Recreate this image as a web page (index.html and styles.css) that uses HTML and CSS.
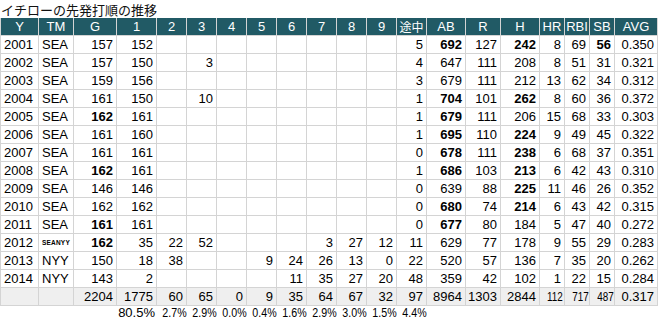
FILE: index.html
```html
<!DOCTYPE html>
<html lang="ja">
<head>
<meta charset="utf-8">
<title>イチローの先発打順の推移</title>
<link rel="stylesheet" href="styles.css">
</head>
<body>
<h1 class="title">イチローの先発打順の推移</h1>
<div class="sheet">
  <div class="row head">
    <div class="c">Y</div><div class="c">TM</div><div class="c">G</div><div class="c">1</div><div class="c">2</div><div class="c">3</div><div class="c">4</div><div class="c">5</div><div class="c">6</div><div class="c">7</div><div class="c">8</div><div class="c">9</div><div class="c jp">途中</div><div class="c">AB</div><div class="c">R</div><div class="c">H</div><div class="c">HR</div><div class="c">RBI</div><div class="c">SB</div><div class="c">AVG</div>
  </div>
  <div class="row">
    <div class="c l">2001</div><div class="c l">SEA</div><div class="c">157</div><div class="c">152</div><div class="c"></div><div class="c"></div><div class="c"></div><div class="c"></div><div class="c"></div><div class="c"></div><div class="c"></div><div class="c"></div><div class="c">5</div><div class="c b">692</div><div class="c">127</div><div class="c b">242</div><div class="c">8</div><div class="c">69</div><div class="c b">56</div><div class="c">0.350</div>
  </div>
  <div class="row">
    <div class="c l">2002</div><div class="c l">SEA</div><div class="c">157</div><div class="c">150</div><div class="c"></div><div class="c">3</div><div class="c"></div><div class="c"></div><div class="c"></div><div class="c"></div><div class="c"></div><div class="c"></div><div class="c">4</div><div class="c">647</div><div class="c">111</div><div class="c">208</div><div class="c">8</div><div class="c">51</div><div class="c">31</div><div class="c">0.321</div>
  </div>
  <div class="row">
    <div class="c l">2003</div><div class="c l">SEA</div><div class="c">159</div><div class="c">156</div><div class="c"></div><div class="c"></div><div class="c"></div><div class="c"></div><div class="c"></div><div class="c"></div><div class="c"></div><div class="c"></div><div class="c">3</div><div class="c">679</div><div class="c">111</div><div class="c">212</div><div class="c">13</div><div class="c">62</div><div class="c">34</div><div class="c">0.312</div>
  </div>
  <div class="row">
    <div class="c l">2004</div><div class="c l">SEA</div><div class="c">161</div><div class="c">150</div><div class="c"></div><div class="c">10</div><div class="c"></div><div class="c"></div><div class="c"></div><div class="c"></div><div class="c"></div><div class="c"></div><div class="c">1</div><div class="c b">704</div><div class="c">101</div><div class="c b">262</div><div class="c">8</div><div class="c">60</div><div class="c">36</div><div class="c">0.372</div>
  </div>
  <div class="row">
    <div class="c l">2005</div><div class="c l">SEA</div><div class="c b">162</div><div class="c">161</div><div class="c"></div><div class="c"></div><div class="c"></div><div class="c"></div><div class="c"></div><div class="c"></div><div class="c"></div><div class="c"></div><div class="c">1</div><div class="c b">679</div><div class="c">111</div><div class="c">206</div><div class="c">15</div><div class="c">68</div><div class="c">33</div><div class="c">0.303</div>
  </div>
  <div class="row">
    <div class="c l">2006</div><div class="c l">SEA</div><div class="c">161</div><div class="c">160</div><div class="c"></div><div class="c"></div><div class="c"></div><div class="c"></div><div class="c"></div><div class="c"></div><div class="c"></div><div class="c"></div><div class="c">1</div><div class="c b">695</div><div class="c">110</div><div class="c b">224</div><div class="c">9</div><div class="c">49</div><div class="c">45</div><div class="c">0.322</div>
  </div>
  <div class="row">
    <div class="c l">2007</div><div class="c l">SEA</div><div class="c">161</div><div class="c">161</div><div class="c"></div><div class="c"></div><div class="c"></div><div class="c"></div><div class="c"></div><div class="c"></div><div class="c"></div><div class="c"></div><div class="c">0</div><div class="c b">678</div><div class="c">111</div><div class="c b">238</div><div class="c">6</div><div class="c">68</div><div class="c">37</div><div class="c">0.351</div>
  </div>
  <div class="row">
    <div class="c l">2008</div><div class="c l">SEA</div><div class="c b">162</div><div class="c">161</div><div class="c"></div><div class="c"></div><div class="c"></div><div class="c"></div><div class="c"></div><div class="c"></div><div class="c"></div><div class="c"></div><div class="c">1</div><div class="c b">686</div><div class="c">103</div><div class="c b">213</div><div class="c">6</div><div class="c">42</div><div class="c">43</div><div class="c">0.310</div>
  </div>
  <div class="row">
    <div class="c l">2009</div><div class="c l">SEA</div><div class="c">146</div><div class="c">146</div><div class="c"></div><div class="c"></div><div class="c"></div><div class="c"></div><div class="c"></div><div class="c"></div><div class="c"></div><div class="c"></div><div class="c">0</div><div class="c">639</div><div class="c">88</div><div class="c b">225</div><div class="c">11</div><div class="c">46</div><div class="c">26</div><div class="c">0.352</div>
  </div>
  <div class="row">
    <div class="c l">2010</div><div class="c l">SEA</div><div class="c">162</div><div class="c">162</div><div class="c"></div><div class="c"></div><div class="c"></div><div class="c"></div><div class="c"></div><div class="c"></div><div class="c"></div><div class="c"></div><div class="c">0</div><div class="c b">680</div><div class="c">74</div><div class="c b">214</div><div class="c">6</div><div class="c">43</div><div class="c">42</div><div class="c">0.315</div>
  </div>
  <div class="row">
    <div class="c l">2011</div><div class="c l">SEA</div><div class="c b">161</div><div class="c">161</div><div class="c"></div><div class="c"></div><div class="c"></div><div class="c"></div><div class="c"></div><div class="c"></div><div class="c"></div><div class="c"></div><div class="c">0</div><div class="c b">677</div><div class="c">80</div><div class="c">184</div><div class="c">5</div><div class="c">47</div><div class="c">40</div><div class="c">0.272</div>
  </div>
  <div class="row">
    <div class="c l">2012</div><div class="c l tiny">SEANYY</div><div class="c b">162</div><div class="c">35</div><div class="c">22</div><div class="c">52</div><div class="c"></div><div class="c"></div><div class="c"></div><div class="c">3</div><div class="c">27</div><div class="c">12</div><div class="c">11</div><div class="c">629</div><div class="c">77</div><div class="c">178</div><div class="c">9</div><div class="c">55</div><div class="c">29</div><div class="c">0.283</div>
  </div>
  <div class="row">
    <div class="c l">2013</div><div class="c l">NYY</div><div class="c">150</div><div class="c">18</div><div class="c">38</div><div class="c"></div><div class="c"></div><div class="c">9</div><div class="c">24</div><div class="c">26</div><div class="c">13</div><div class="c">0</div><div class="c">22</div><div class="c">520</div><div class="c">57</div><div class="c">136</div><div class="c">7</div><div class="c">35</div><div class="c">20</div><div class="c">0.262</div>
  </div>
  <div class="row">
    <div class="c l">2014</div><div class="c l">NYY</div><div class="c">143</div><div class="c">2</div><div class="c"></div><div class="c"></div><div class="c"></div><div class="c"></div><div class="c">11</div><div class="c">35</div><div class="c">27</div><div class="c">20</div><div class="c">48</div><div class="c">359</div><div class="c">42</div><div class="c">102</div><div class="c">1</div><div class="c">22</div><div class="c">15</div><div class="c">0.284</div>
  </div>
  <div class="row total">
    <div class="c"></div><div class="c"></div><div class="c">2204</div><div class="c">1775</div><div class="c">60</div><div class="c">65</div><div class="c">0</div><div class="c">9</div><div class="c">35</div><div class="c">64</div><div class="c">67</div><div class="c">32</div><div class="c">97</div><div class="c">8964</div><div class="c">1303</div><div class="c">2844</div><div class="c"><span class="fit">112</span></div><div class="c"><span class="fit">717</span></div><div class="c"><span class="fit">487</span></div><div class="c">0.317</div>
  </div>
  <div class="row pct">
    <div class="p"></div><div class="p"></div><div class="p"></div><div class="p">80.5%</div><div class="p"><span class="fit">2.7%</span></div><div class="p"><span class="fit">2.9%</span></div><div class="p"><span class="fit">0.0%</span></div><div class="p"><span class="fit">0.4%</span></div><div class="p"><span class="fit">1.6%</span></div><div class="p"><span class="fit">2.9%</span></div><div class="p"><span class="fit">3.0%</span></div><div class="p"><span class="fit">1.5%</span></div><div class="p"><span class="fit">4.4%</span></div>
  </div>
</div>
</body>
</html>
```
FILE: styles.css
```css
html, body {
  margin: 0;
  padding: 0;
  background: #ffffff;
}
body {
  font-family: "Liberation Sans", Arial, "Noto Sans CJK JP", sans-serif;
  font-size: 13px;
  color: #000000;
}
.title {
  margin: 0;
  height: 18px;
  padding-left: 1px;
  font-family: "Noto Sans CJK JP", sans-serif;
  font-size: 13px;
  font-weight: normal;
  line-height: 19px;
  color: #111111;
}
.sheet {
  width: 658px;
}
.row {
  display: grid;
  grid-template-columns: 39px 35px 43px 40px repeat(9, 30px) 39px 35px 39px 25px 25px 25px 43px;
  height: 18px;
}
.c {
  box-sizing: border-box;
  border-right: 1px solid #d4d4d4;
  border-bottom: 1px solid #d4d4d4;
  padding: 0 3px 0 2px;
  text-align: right;
  line-height: 18px;
  white-space: nowrap;
  overflow: hidden;
}
.row > .c:first-child {
  border-left: 1px solid #d4d4d4;
}
.head .c {
  background: #215a65;
  color: #ffffff;
  text-align: center;
  padding: 0;
}
.jp {
  font-family: "Noto Sans CJK JP", sans-serif;
  font-size: 12px;
}
.l {
  text-align: left;
  padding-left: 3px;
}
.b {
  font-weight: bold;
}
.tiny {
  font-size: 6.5px;
  font-weight: bold;
  letter-spacing: 0.2px;
}
.total .c {
  background: #efefef;
}
.fit {
  display: inline-block;
  transform: scaleX(0.76);
  transform-origin: right center;
}
.pct {
  height: 13px;
}
.p {
  box-sizing: border-box;
  padding-right: 2px;
  text-align: right;
  line-height: 14px;
  white-space: nowrap;
}
.pct .fit {
  transform: scaleX(0.82);
}
```
